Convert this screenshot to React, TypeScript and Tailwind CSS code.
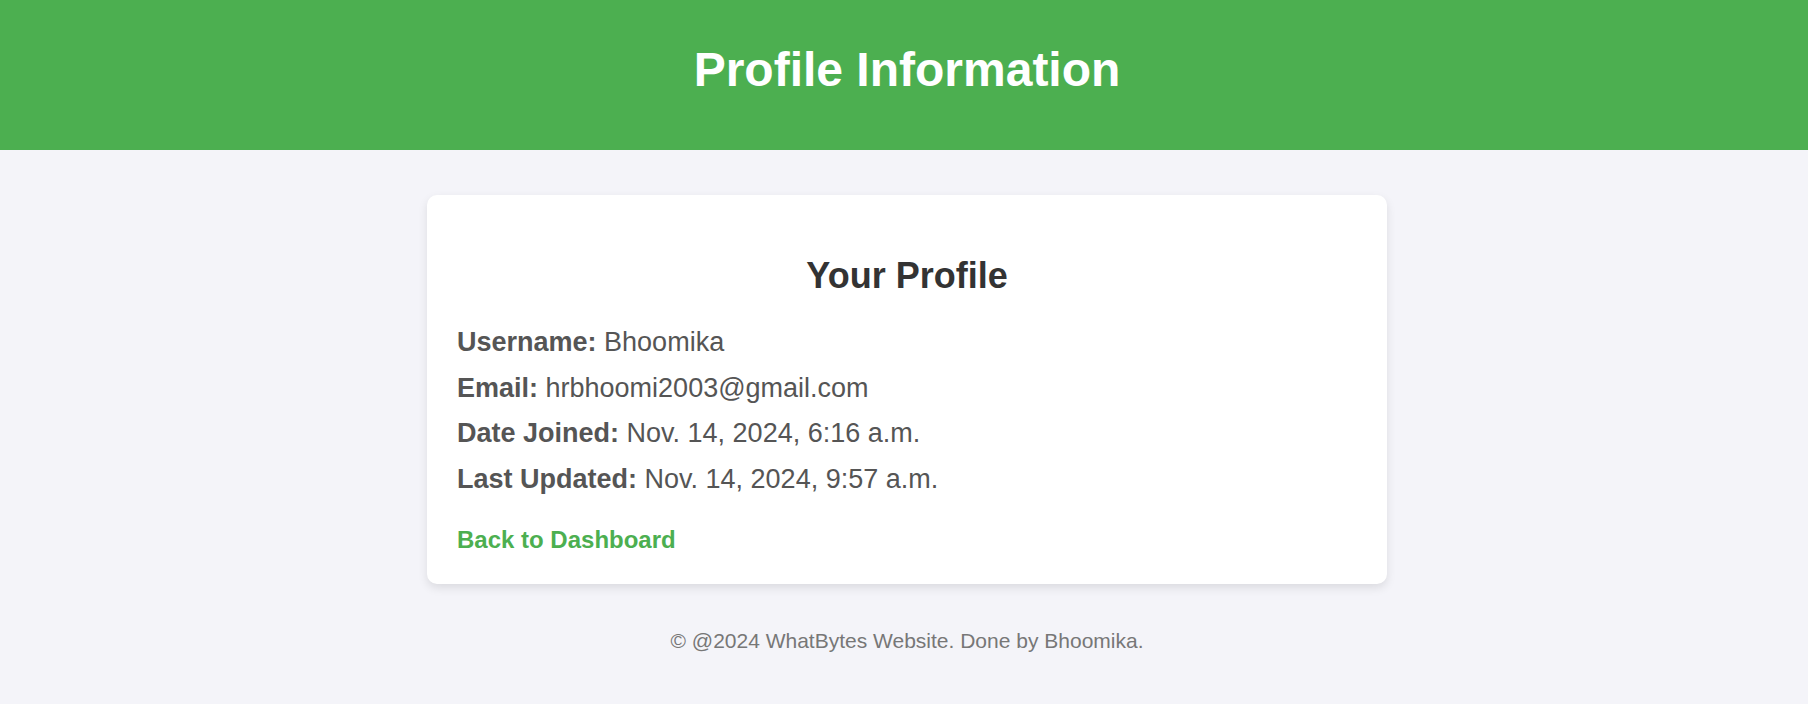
import React from 'react';

const rows = [
  { label: 'Username:', value: 'Bhoomika' },
  { label: 'Email:', value: 'hrbhoomi2003@gmail.com' },
  { label: 'Date Joined:', value: 'Nov. 14, 2024, 6:16 a.m.' },
  { label: 'Last Updated:', value: 'Nov. 14, 2024, 9:57 a.m.' },
];

export default function App() {
  return (
    <div className="min-h-[704px] bg-[#f4f4f9] font-['Liberation_Sans',Arial,sans-serif]">
      {/* Header */}
      <header className="h-[150px] bg-[#4caf50] pt-[42px] pl-[6px]">
        <h1 className="text-center text-[48px] font-bold leading-[55px] text-white">Profile Information</h1>
      </header>

      <main className="pl-[6px] pt-[45px]">
        <div className="mx-auto w-[960px] rounded-[10px] bg-white px-[30px] pt-[60px] pb-[30px] shadow-[0_4px_10px_rgba(0,0,0,0.1)]">
          <h2 className="text-center text-[36px] font-bold leading-[41px] text-[#333]">Your Profile</h2>

          <div className="mt-[31px] flex flex-col gap-[14.5px]">
            {rows.map((r) => (
              <p key={r.label} className="text-[27px] leading-[31px] text-[#555]">
                <strong className="font-bold">{r.label}</strong> {r.value}
              </p>
            ))}
          </div>

          <a href="#" className="mt-[31px] block text-[24px] font-bold leading-[28px] text-[#4caf50]">
            Back to Dashboard
          </a>
        </div>

        <footer className="pt-[45px] pb-[40px] text-center text-[21px] leading-[24px] text-[#777]">
          © @2024 WhatBytes Website. Done by Bhoomika.
        </footer>
      </main>
    </div>
  );
}
